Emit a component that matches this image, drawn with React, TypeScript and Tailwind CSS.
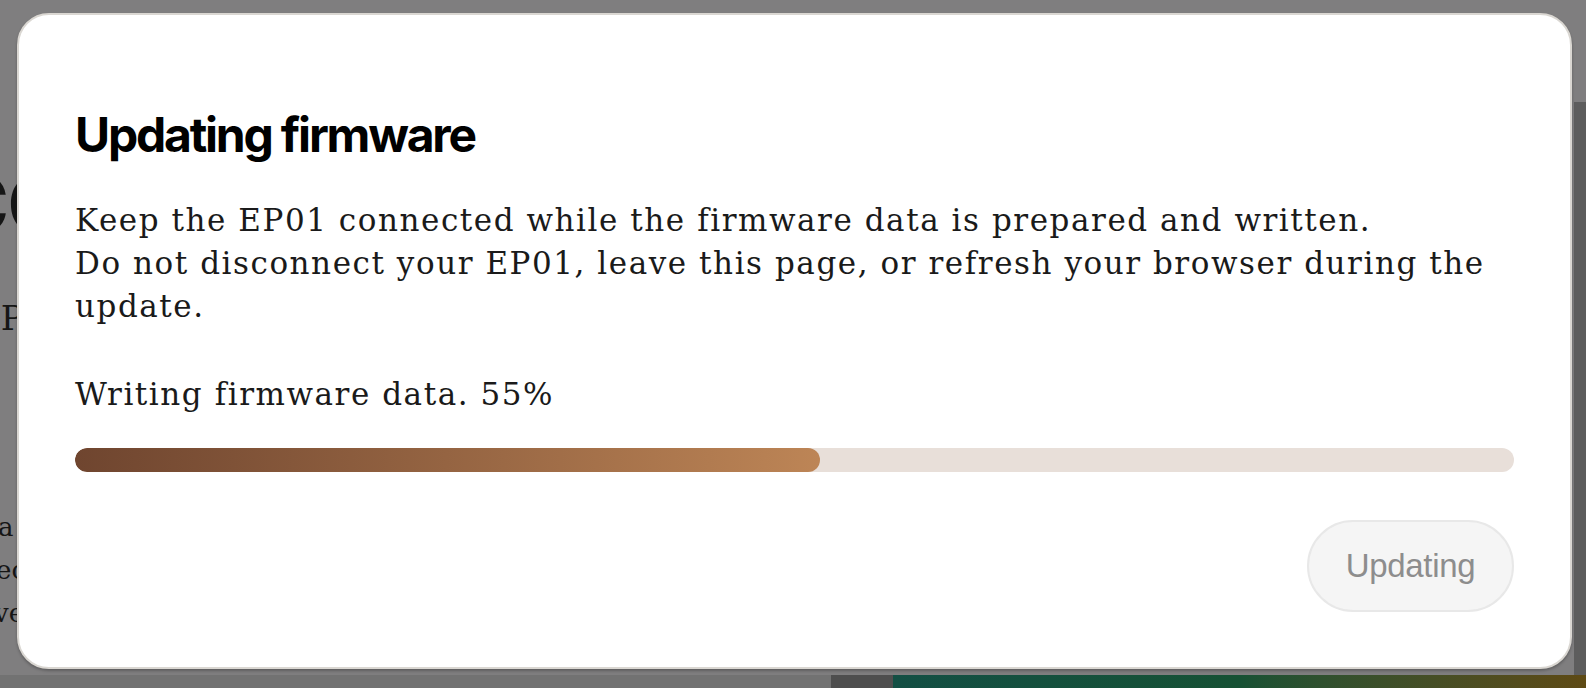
export default function App() {
  const progress = 51.8;

  return (
    <div className="relative h-[688px] w-[1586px] overflow-hidden bg-[#7f7e7f]">
      {/* page behind the overlay */}
      <div className="flex h-full flex-col">
        <div className="flex flex-1">
          <div className="flex-1 overflow-hidden font-['DejaVu_Serif',serif] text-[#161616]">
            <div className="ml-[-50px] mt-[164px] whitespace-nowrap font-['Inter',sans-serif] text-[80px] font-bold leading-none tracking-tight">
              CO
            </div>
            <div className="ml-[-24px] mt-[57px] whitespace-nowrap text-[34px] leading-none">EP0</div>
            <div className="ml-[-2px] mt-[171px] text-[26px] leading-[43px]">
              <div>a</div>
              <div className="ml-[-2px]">ec</div>
              <div className="ml-[-4px]">ve</div>
            </div>
          </div>
          <div className="flex w-[12px] flex-col">
            <div className="h-[102px]" />
            <div className="flex-1 bg-[#5d5d5d]" />
          </div>
        </div>
        <div className="flex h-[13px]">
          <div className="w-[831px] bg-[#727272]" />
          <div className="w-[62px] bg-[#4e4e4e]" />
          <div className="flex-1 bg-gradient-to-r from-[#134f44] via-[#165134] to-[#5e4a14]" />
        </div>
      </div>

      {/* modal */}
      <div className="absolute left-[17px] top-[13px] flex h-[656px] w-[1555px] flex-col rounded-[32px] border-2 border-[#dad7d2] bg-white px-14 pt-[96px] shadow-[0_2px_3px_rgba(0,0,0,0.25)]">
        <h1 className="font-['Inter',sans-serif] text-[48px] font-bold leading-none tracking-[-0.046em] text-black">
          Updating firmware
        </h1>

        <div className="mt-[40px] font-['DejaVu_Serif',serif] text-[31px] leading-[43px] tracking-[0.05em] text-[#1a1a1a]">
          <p>Keep the EP01 connected while the firmware data is prepared and written.</p>
          <p>
            Do not disconnect your EP01, leave this page, or refresh your browser during the
            update.
          </p>
          <p className="mt-[45px]">Writing firmware data. 55%</p>
        </div>

        <div className="mt-[32px] h-6 w-full overflow-hidden rounded-full bg-[#e8dfd9]">
          <div
            className="h-full rounded-full bg-gradient-to-r from-[#6f452f] to-[#bd8556]"
            style={{ width: `${progress}%` }}
          />
        </div>

        <div className="mt-12 flex justify-end">
          <button
            disabled
            className="h-[92px] w-[207px] rounded-full border-2 border-[#e8e8e8] bg-[#f5f5f5] font-['Liberation_Sans',sans-serif] text-[33px] tracking-[-0.01em] text-[#8d8d8d]"
          >
            Updating
          </button>
        </div>
      </div>
    </div>
  );
}
